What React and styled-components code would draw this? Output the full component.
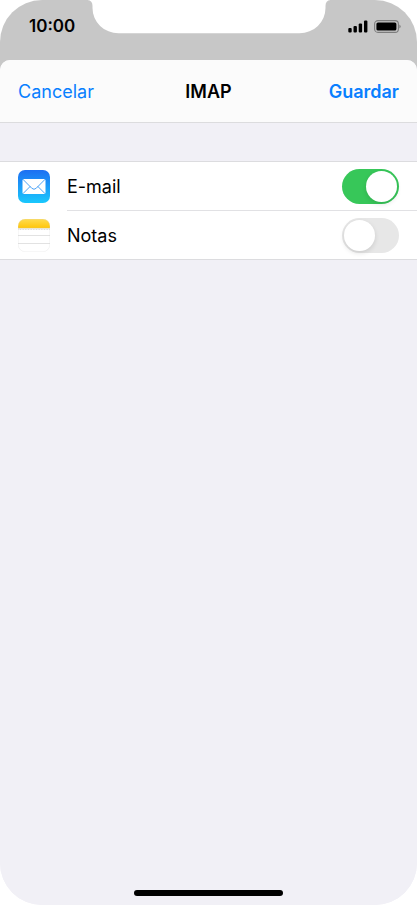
import React, { useState } from "react";
import styled, { createGlobalStyle } from "styled-components";

const GlobalStyle = createGlobalStyle`
  * { box-sizing: border-box; }
  body { margin: 0; background: #fff; }
  body, button, input { font-family: Inter, "Liberation Sans", sans-serif; }
`;

const Phone = styled.div`
  position: relative;
  display: flex;
  flex-direction: column;
  min-height: 100vh;
  overflow: hidden;
  border-radius: 42px;
  background: linear-gradient(#c7c7c7 80px, #f1f0f6 80px);
  color: #000;
`;

const StatusBar = styled.header`
  display: flex;
  justify-content: space-between;
  height: 60px;
  padding: 16px 16px 0 29px;
`;

const Clock = styled.time`
  font-size: 17px;
  line-height: 20px;
  font-weight: 600;
`;

const StatusIcons = styled.div`
  display: flex;
  align-items: center;
  gap: 6px;
  height: 20px;
`;

const Notch = styled.svg`
  position: absolute;
  top: 0;
  left: 50%;
  transform: translateX(-50%);
`;

const Sheet = styled.main`
  display: flex;
  flex: 1;
  flex-direction: column;
  overflow: hidden;
  border-radius: 10px 10px 0 0;
  background: #f1f0f6;
`;

const NavBar = styled.nav`
  display: grid;
  grid-template-columns: 1fr auto 1fr;
  align-items: center;
  height: 63px;
  padding: 2px 18px 0;
  border-bottom: 1px solid #dcdcde;
  background: #fbfbfb;
`;

const Title = styled.h1`
  margin: 0;
  font-size: 18px;
  line-height: 24px;
  font-weight: 600;
`;

const NavButton = styled.button`
  justify-self: ${({ $end }) => ($end ? "end" : "start")};
  padding: 0;
  border: 0;
  background: none;
  color: #087fff;
  font-size: 18px;
  line-height: 24px;
  font-weight: ${({ $end }) => ($end ? 600 : 400)};
  cursor: pointer;
`;

const List = styled.ul`
  margin: 38px 0 0;
  padding: 0;
  list-style: none;
  border-top: 1px solid #dcdcdf;
  background: #fff;
`;

const Row = styled.li`
  display: flex;
  align-items: stretch;
  gap: 17px;
  height: 49px;
  padding-left: 18px;

  &:last-child { border-bottom: 1px solid #dcdcdf; }
`;

const AppIcon = styled.svg`
  flex: none;
  align-self: center;
`;

const RowBody = styled.div`
  display: flex;
  flex: 1;
  align-items: center;
  justify-content: space-between;
  padding-right: 18px;
  border-bottom: ${({ $divided }) => ($divided ? "1px solid #e1e1e4" : "0")};
`;

const RowLabel = styled.label`
  padding-top: 2px;
  font-size: 18px;
  line-height: 24px;
`;

const Switch = styled.input`
  appearance: none;
  display: flex;
  align-items: center;
  width: 57px;
  height: 35px;
  margin: 0;
  padding: 0 2px;
  border-radius: 18px;
  background: #e7e7e7;
  cursor: pointer;

  &::before {
    content: "";
    width: 31px;
    height: 31px;
    border-radius: 50%;
    background: #fff;
    box-shadow: 0 2px 5px rgba(0, 0, 0, 0.12);
  }

  &:checked {
    justify-content: flex-end;
    background: #37c759;
  }
`;

const HomeIndicator = styled.div`
  width: 149px;
  height: 6px;
  margin: auto auto 9px;
  border-radius: 3px;
  background: #000;
`;

function MailIcon() {
  return (
    <AppIcon width="32" height="33" viewBox="0 0 32 33" aria-hidden="true">
      <defs>
        <linearGradient id="mailSky" x1="0" y1="0" x2="0" y2="1">
          <stop offset="0" stopColor="#1d6ff2" />
          <stop offset="1" stopColor="#19c8fd" />
        </linearGradient>
      </defs>
      <rect width="32" height="33" rx="7" fill="url(#mailSky)" />
      <rect x="4.5" y="9" width="23" height="15" rx="1.5" fill="#fff" />
      <g fill="none" stroke="#3697f5" strokeWidth="0.9" strokeLinecap="round" strokeLinejoin="round">
        <path d="M5.2 9.6 13.7 18.2Q16 20.4 18.3 18.2L26.8 9.6" />
        <path d="M5.2 23.4 12 16.6M26.8 23.4 20 16.6" />
      </g>
    </AppIcon>
  );
}

function NotesIcon() {
  return (
    <AppIcon width="32" height="33" viewBox="0 0 32 33" aria-hidden="true">
      <defs>
        <linearGradient id="notesGold" x1="0" y1="0" x2="0" y2="1">
          <stop offset="0" stopColor="#ffdc50" />
          <stop offset="1" stopColor="#ffc60a" />
        </linearGradient>
        <clipPath id="notesShape">
          <rect width="32" height="33" rx="7" />
        </clipPath>
      </defs>
      <g clipPath="url(#notesShape)">
        <rect width="32" height="33" fill="#fff" />
        <rect width="32" height="9" fill="url(#notesGold)" />
        <path d="M0 9.3H32" stroke="#d5c99c" strokeWidth="0.6" />
        <path d="M0.5 10.5H32" stroke="#c6c6c6" strokeWidth="0.8" strokeDasharray="0.8 0.8" />
        <path d="M0 16.5H32M0 24.5H32" stroke="#e2e2e2" strokeWidth="1" />
      </g>
      <rect x="0.25" y="0.25" width="31.5" height="32.5" rx="7" fill="none" stroke="#d8d8d8" strokeWidth="0.5" strokeOpacity="0.5" />
    </AppIcon>
  );
}

function SignalIcon() {
  return (
    <svg width="20" height="13" viewBox="0 0 20 13" role="img" aria-label="Red móvil">
      <rect x="0.3" y="8" width="3.4" height="4.5" rx="1.1" />
      <rect x="5.5" y="6" width="3.4" height="6.5" rx="1.1" />
      <rect x="10.7" y="3.5" width="3.4" height="9" rx="1.1" />
      <rect x="16" y="0.5" width="3.4" height="12" rx="1.1" />
    </svg>
  );
}

function BatteryIcon() {
  return (
    <svg width="27" height="13" viewBox="0 0 27 13" role="img" aria-label="Batería">
      <rect x="0.6" y="0.6" width="23.8" height="11.8" rx="3.4" fill="none" stroke="#7d7d7d" strokeWidth="1.1" />
      <rect x="2.4" y="2.4" width="20" height="8.2" rx="1.6" />
      <path d="M25.4 4.4Q28 6.5 25.4 8.6Z" fill="#7d7d7d" />
    </svg>
  );
}

const accounts = [
  { id: "mail", label: "E-mail", Icon: MailIcon, enabled: true },
  { id: "notes", label: "Notas", Icon: NotesIcon, enabled: false },
];

function SettingRow({ id, label, Icon, enabled, divided }) {
  const [on, setOn] = useState(enabled);
  return (
    <Row>
      <Icon />
      <RowBody $divided={divided}>
        <RowLabel htmlFor={id}>{label}</RowLabel>
        <Switch id={id} type="checkbox" role="switch" checked={on} onChange={() => setOn(!on)} />
      </RowBody>
    </Row>
  );
}

export default function App() {
  return (
    <>
      <GlobalStyle />
      <Phone>
        <StatusBar>
          <Clock>10:00</Clock>
          <StatusIcons>
            <SignalIcon />
            <BatteryIcon />
          </StatusIcons>
        </StatusBar>
        <Notch width="243" height="34" viewBox="0 0 243 34" aria-hidden="true">
          <path d="M0 0Q5 0.5 5 6V8A26 25.3 0 0 0 31 33.3H212A26 25.3 0 0 0 238 8V6Q238 0.5 243 0Z" fill="#fff" />
        </Notch>
        <Sheet>
          <NavBar>
            <NavButton type="button">Cancelar</NavButton>
            <Title>IMAP</Title>
            <NavButton type="button" $end>Guardar</NavButton>
          </NavBar>
          <List>
            {accounts.map((account, index) => (
              <SettingRow key={account.id} {...account} divided={index < accounts.length - 1} />
            ))}
          </List>
          <HomeIndicator />
        </Sheet>
      </Phone>
    </>
  );
}
